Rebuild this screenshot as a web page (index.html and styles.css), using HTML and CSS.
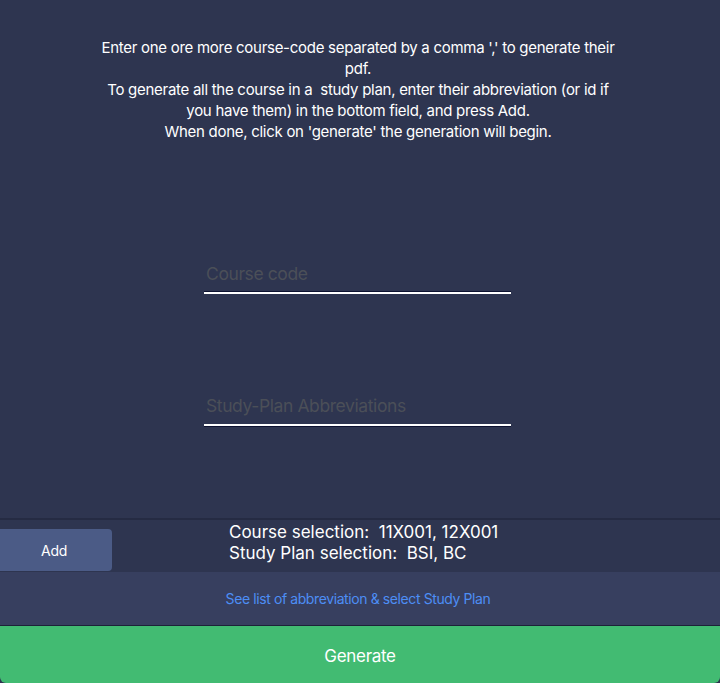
FILE: index.html
```html
<!DOCTYPE html>
<html>
<head>
<meta charset="utf-8">
<link rel="stylesheet" href="styles.css">
</head>
<body>
<div class="page">
  <div class="intro">
    <p>Enter one ore more course-code separated by a comma ',' to generate their pdf.<br>To generate all the course in a&nbsp; study plan, enter their abbreviation (or id if you have them) in the bottom field, and press Add.<br>When done, click on 'generate' the generation will begin.</p>
  </div>
  <div class="fields">
    <div class="field field-top"><input type="text" placeholder="Course code"></div>
    <div class="field field-bottom"><input type="text" placeholder="Study-Plan Abbreviations"></div>
  </div>
  <div class="bottom">
    <div class="row">
      <button class="add">Add</button>
      <div class="selection">
        <div>Course selection:&nbsp; 11X001, 12X001</div>
        <div>Study Plan selection:&nbsp; BSI, BC</div>
      </div>
    </div>
    <div class="link-band"><a class="link">See list of abbreviation &amp; select Study Plan</a></div>
    <button class="generate">Generate</button>
  </div>
</div>
</body>
</html>
```
FILE: styles.css
```css
html, body {
  margin: 0;
  padding: 0;
  background: #2e3550;
}
body {
  font-family: Inter, "Noto Sans", sans-serif;
  color: #ffffff;
}
.page {
  width: 720px;
  height: 683px;
  display: flex;
  flex-direction: column;
}
.intro {
  display: flex;
  justify-content: center;
  padding-top: 37px;
  margin-left: -4px;
}
.intro p {
  margin: 0;
  width: 514px;
  text-align: center;
  font-size: 15px;
  line-height: 21px;
  letter-spacing: -0.28px;
}
.fields {
  flex: 1;
  display: flex;
  flex-direction: column;
  align-items: center;
  padding-top: 121px;
  gap: 101px;
}
.field {
  width: 307px;
  margin-left: -5px;
}
.field input {
  width: 100%;
  box-sizing: border-box;
  background: transparent;
  border: none;
  outline: none;
  font-family: Inter, "Noto Sans", sans-serif;
  font-size: 17.5px;
  letter-spacing: -0.4px;
  color: #fff;
  padding: 0 2px 8px 2px;
}
.field input::placeholder {
  color: #4b4f58;
}
.field-top input {
  border-bottom: 2px solid #ffffff;
  box-shadow: 0 -1px 0 #0d1230 inset;
}
.field-bottom input {
  border-bottom: 2px solid #ffffff;
  box-shadow: 0 1px 0 #0d1230;
}
.bottom {
  border-top: 2px solid #252b43;
  display: flex;
  flex-direction: column;
}
.row {
  display: flex;
  align-items: flex-start;
  height: 52px;
}
.add {
  margin-top: 9px;
  margin-left: -4px;
  width: 116px;
  height: 42px;
  border: none;
  border-radius: 0 4px 4px 0;
  background: #4b5b86;
  color: #fff;
  font-family: Inter, "Noto Sans", sans-serif;
  font-size: 14px;
  letter-spacing: -0.3px;
  padding: 0;
}
.selection {
  margin-left: 117px;
  padding-top: 2px;
  font-size: 17px;
  line-height: 21px;
  letter-spacing: 0;
}
.link-band {
  height: 53px;
  background: #373f5f;
  display: flex;
  align-items: center;
  justify-content: center;
}
.link {
  color: #4d8ef5;
  font-size: 14px;
  letter-spacing: -0.4px;
  margin-left: -4px;
}
.generate {
  height: 58px;
  flex: none;
  border: none;
  border-top: 1px solid #1d2238;
  background: #42bb72;
  border-radius: 0 0 6px 6px;
  color: #fff;
  font-family: Inter, "Noto Sans", sans-serif;
  font-size: 17px;
  letter-spacing: -0.3px;
  padding: 2px 0 0 0;
}
```
